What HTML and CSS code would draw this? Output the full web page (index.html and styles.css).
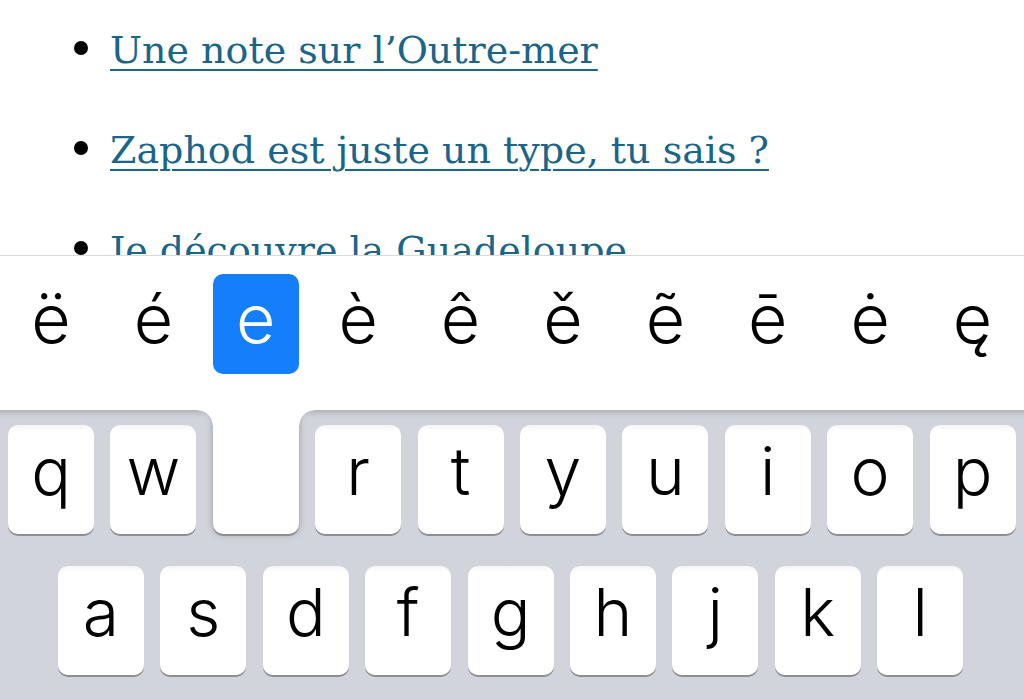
FILE: index.html
```html
<!DOCTYPE html>
<html lang="fr">
<head>
<meta charset="utf-8">
<title>Clavier</title>
<link rel="stylesheet" href="styles.css">
</head>
<body>
<div class="screen">
  <section class="page">
    <ul class="links">
      <li><a href="#">Une note sur l’Outre-mer</a></li>
      <li><a href="#">Zaphod est juste un type, tu sais ?</a></li>
      <li><a href="#">Je découvre la Guadeloupe</a></li>
    </ul>
  </section>
  <div class="accents">
    <span class="acc">ë</span>
    <span class="acc">é</span>
    <span class="acc sel">e</span>
    <span class="acc">è</span>
    <span class="acc">ê</span>
    <span class="acc">ě</span>
    <span class="acc">ẽ</span>
    <span class="acc">ē</span>
    <span class="acc">ė</span>
    <span class="acc">ę</span>
  </div>
  <div class="keyboard">
    <div class="row row1">
      <div class="key">q</div>
      <div class="key">w</div>
      <div class="key stem"></div>
      <div class="key">r</div>
      <div class="key">t</div>
      <div class="key">y</div>
      <div class="key">u</div>
      <div class="key">i</div>
      <div class="key">o</div>
      <div class="key">p</div>
    </div>
    <div class="row row2">
      <div class="key">a</div>
      <div class="key">s</div>
      <div class="key">d</div>
      <div class="key">f</div>
      <div class="key">g</div>
      <div class="key">h</div>
      <div class="key">j</div>
      <div class="key">k</div>
      <div class="key">l</div>
    </div>
  </div>
</div>
</body>
</html>
```
FILE: styles.css
```css
html, body {
  margin: 0;
  padding: 0;
  background: #ffffff;
}

.screen {
  width: 1024px;
  height: 699px;
  overflow: hidden;
  display: flex;
  flex-direction: column;
}

.page {
  height: 255px;
  overflow: hidden;
  flex: none;
}

.links {
  list-style: none;
  margin: 0;
  padding: 0 0 0 110px;
  font-family: "DejaVu Serif", serif;
  font-size: 38px;
}

.links li {
  position: relative;
  line-height: 100px;
  height: 100px;
}

.links li::before {
  content: "";
  position: absolute;
  left: -36px;
  top: 41px;
  width: 14px;
  height: 14px;
  border-radius: 50%;
  background: #000;
}

.links a {
  color: #1a6589;
  text-decoration: underline;
  text-decoration-thickness: 2px;
  text-underline-offset: 6px;
}

.accents {
  flex: none;
  border-top: 1px solid #d9d9d9;
  display: grid;
  grid-template-columns: repeat(10, 86px);
  column-gap: 16.4px;
  padding: 18px 0 0 8px;
  box-sizing: border-box;
  height: 155px;
  align-content: start;
  font-family: "Inter", "Noto Sans", sans-serif;
  font-weight: 300;
  font-size: 68px;
  color: #000;
}

.acc {
  height: 100px;
  line-height: 88px;
  text-align: center;
  border-radius: 10px;
}

.acc.sel {
  background: #147efb;
  color: #fff;
}

.keyboard {
  flex: none;
  height: 289px;
  overflow: hidden;
  background: linear-gradient(#b2b4b9 0px, #c9ccd2 5px, #d1d4da 10px, #d1d4da 100%);
  display: flex;
  flex-direction: column;
  gap: 32px;
  padding-top: 15px;
  box-sizing: border-box;
  font-family: "Inter", "Noto Sans", sans-serif;
  font-weight: 300;
  font-size: 66px;
  color: #000;
}

.row {
  display: flex;
  align-items: flex-start;
  column-gap: 16.4px;
  padding-left: 8px;
}

.row2 {
  padding-left: 58px;
}

.key {
  flex: none;
  width: 86px;
  height: 109px;
  line-height: 92px;
  text-align: center;
  background: linear-gradient(#f4f4f5 0px, #ffffff 6px);
  border-radius: 10px;
  box-shadow: 0 2px 0 #8c8e93;
}

.key.stem {
  position: relative;
  margin-top: -15px;
  height: 124px;
  background: #ffffff;
  border-radius: 0 0 10px 10px;
  box-shadow: 0 2px 0 #8c8e93, 0 0 7px rgba(0, 0, 0, 0.28);
}

.key.stem::before,
.key.stem::after {
  content: "";
  position: absolute;
  top: 0;
  width: 15px;
  height: 15px;
}

.key.stem::before {
  left: -15px;
  background: radial-gradient(circle at 0 100%, rgba(255,255,255,0) 14px, #ffffff 15px);
}

.key.stem::after {
  right: -15px;
  background: radial-gradient(circle at 100% 100%, rgba(255,255,255,0) 14px, #ffffff 15px);
}
```
